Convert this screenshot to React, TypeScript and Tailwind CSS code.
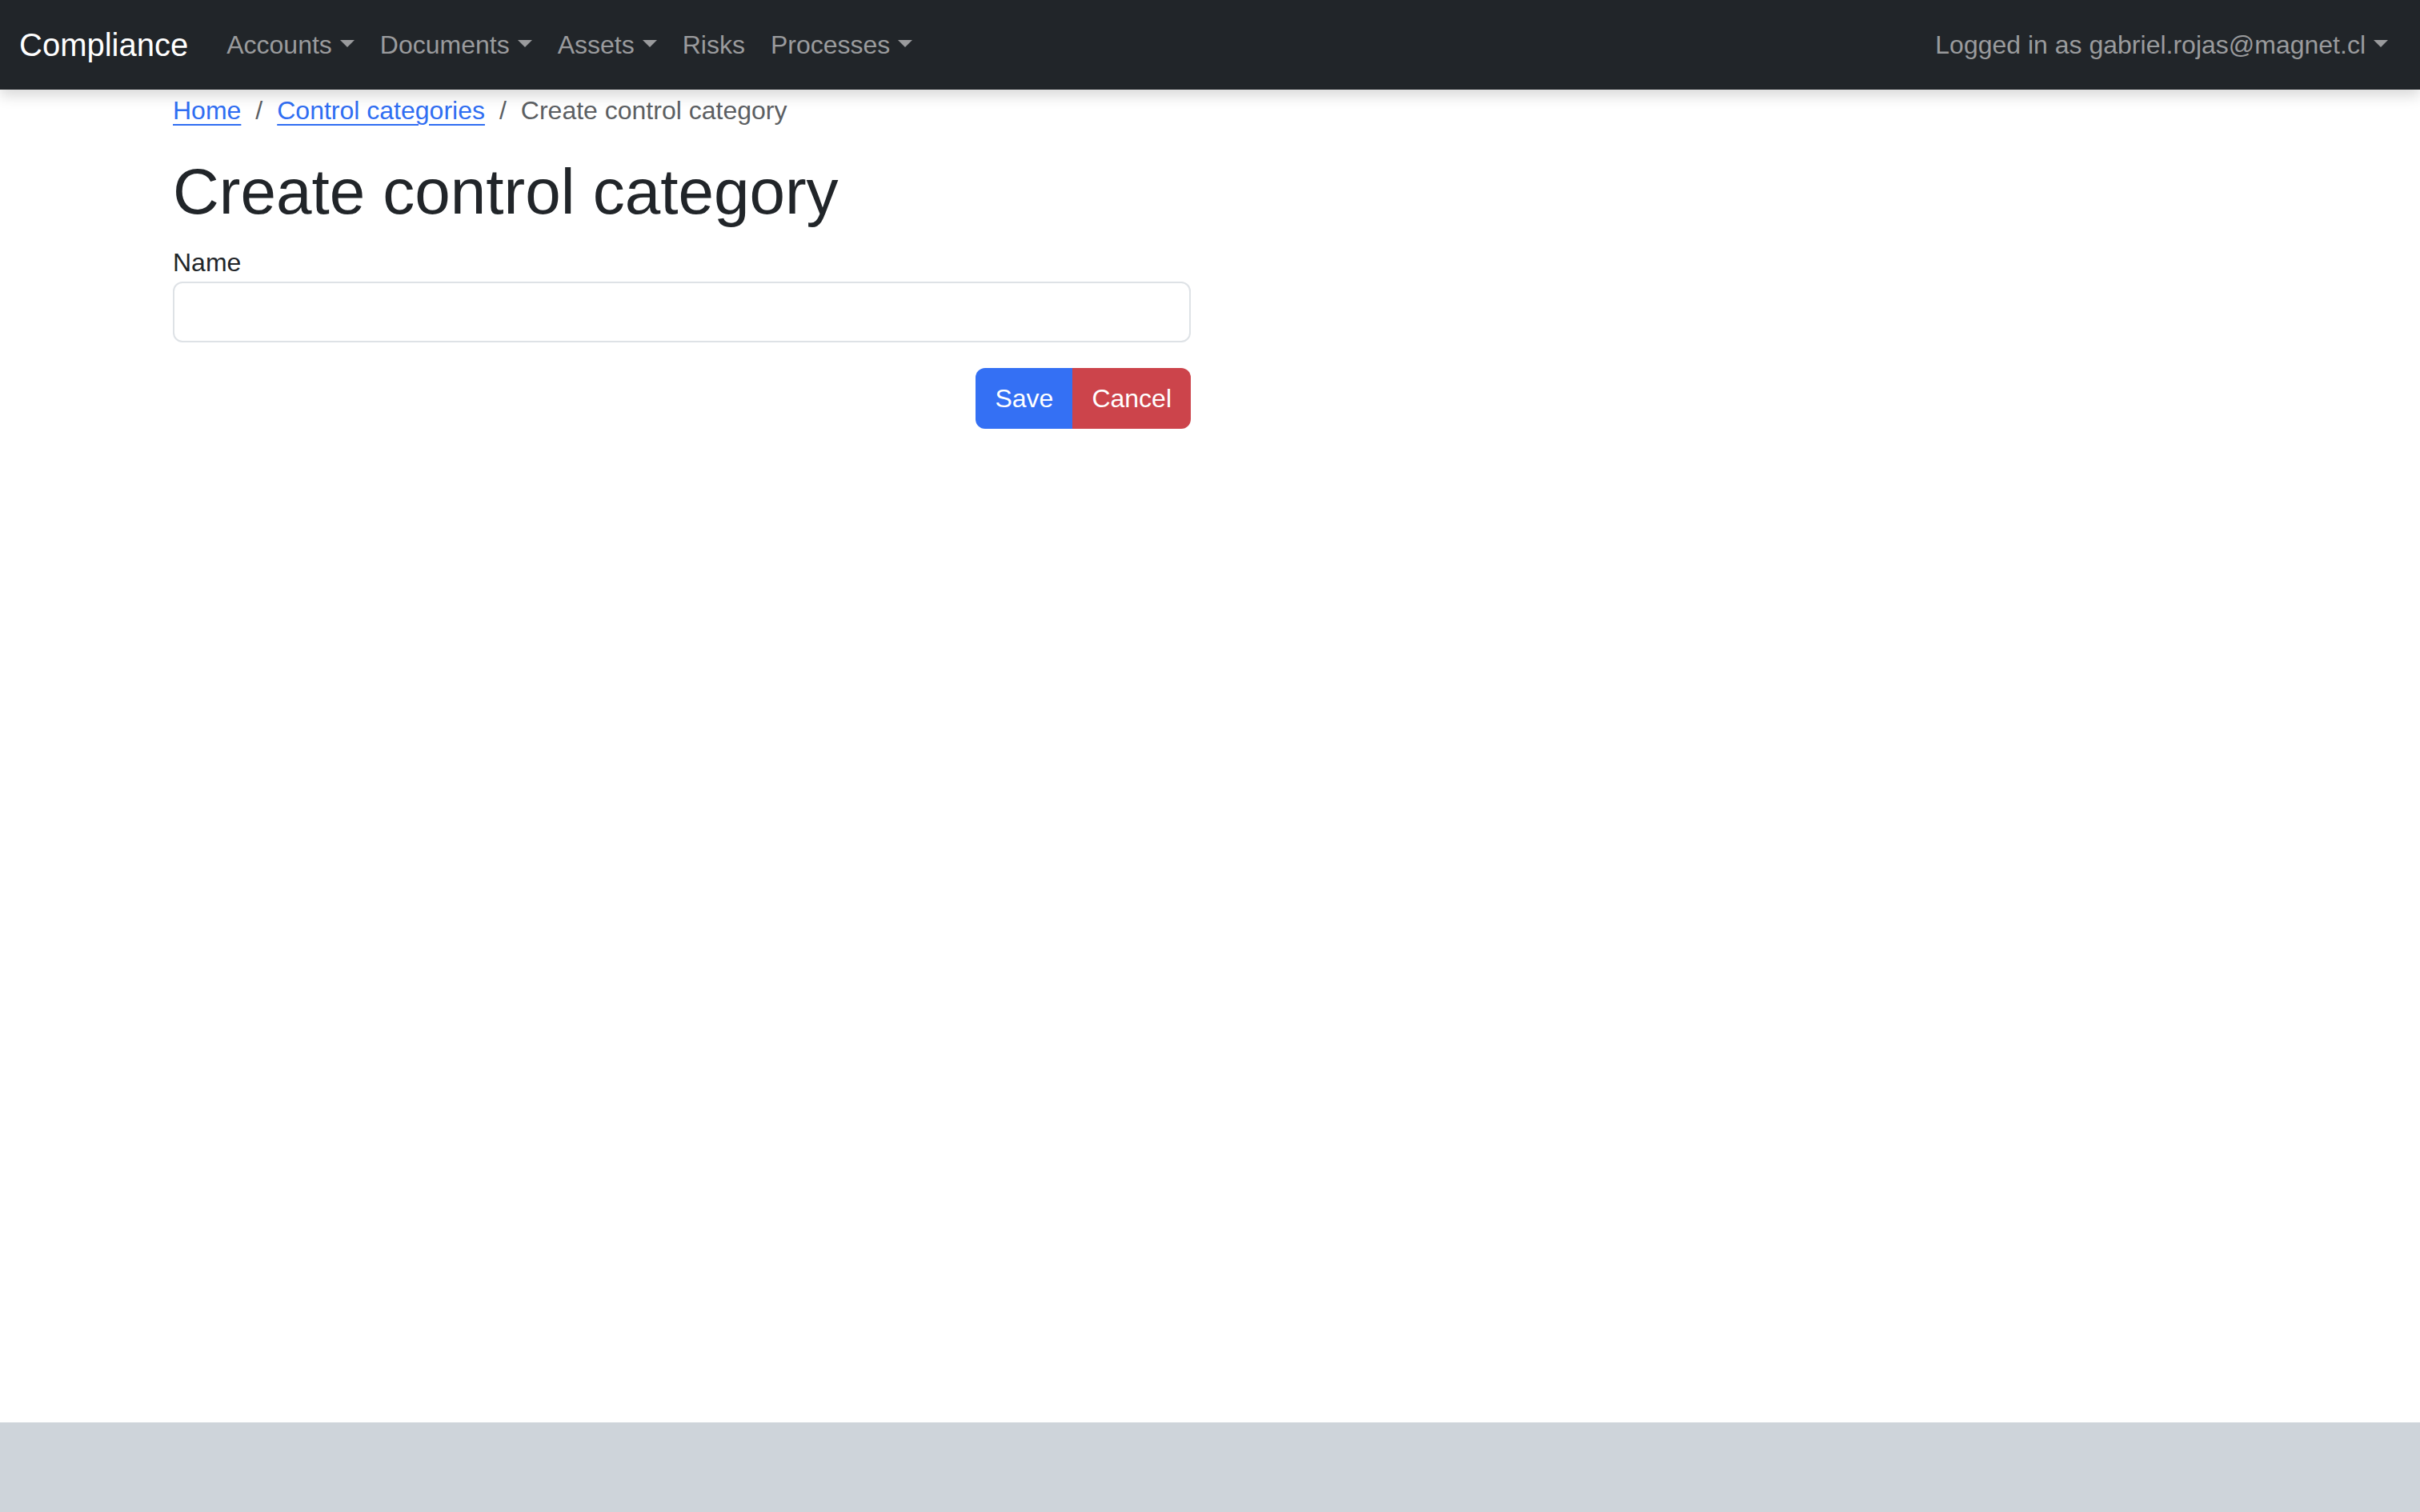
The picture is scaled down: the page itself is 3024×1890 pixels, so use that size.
import React from 'react';

const navItems = [
    { label: 'Accounts', dropdown: true },
    { label: 'Documents', dropdown: true },
    { label: 'Assets', dropdown: true },
    { label: 'Risks', dropdown: false },
    { label: 'Processes', dropdown: true },
];

function Caret() {
    return (
        <span className="ml-[10px] inline-block h-0 w-0 border-x-[9px] border-t-[9px] border-x-transparent border-t-current align-[8px]" />
    );
}

function NavLink({ label, dropdown }: { label: string; dropdown?: boolean }) {
    return (
        <a className="block cursor-pointer px-[16px] py-[16px] leading-[48px] text-[#9a9b9d] hover:text-white/75">
            {label}
            {dropdown && <Caret />}
        </a>
    );
}

export default function App() {
    return (
        <div
            className="flex min-h-screen flex-col bg-white text-[32px] leading-[48px] text-[#212529]"
            style={{ fontFamily: '"Liberation Sans", Arial, sans-serif' }}
        >
            {/* ── Navbar ────────────────────────────────── */}
            <nav className="relative z-10 flex h-[112px] items-center bg-[#212529] px-[24px] shadow-[0_8px_16px_rgba(0,0,0,0.15)]">
                <a className="mr-[32px] text-[40px] leading-[60px] text-white">Compliance</a>
                <ul className="flex items-center">
                    {navItems.map((item) => (
                        <li key={item.label}>
                            <NavLink label={item.label} dropdown={item.dropdown} />
                        </li>
                    ))}
                </ul>
                <div className="ml-auto">
                    <NavLink label="Logged in as gabriel.rojas@magnet.cl" dropdown />
                </div>
            </nav>

            {/* ── Main ──────────────────────────────────── */}
            <main className="flex-1">
                <div className="mx-auto w-[2640px] px-[24px]">
                    <ol className="mb-[30px] flex items-center pt-[2px]">
                        <li>
                            <a className="cursor-pointer text-[#306ef2] underline decoration-[2px] underline-offset-[6px]">
                                Home
                            </a>
                        </li>
                        <li className="flex items-center pl-[18px]">
                            <span className="pr-[18px] text-[#5c5f63]">/</span>
                            <a className="cursor-pointer text-[#306ef2] underline decoration-[2px] underline-offset-[6px]">
                                Control categories
                            </a>
                        </li>
                        <li className="flex items-center pl-[18px] text-[#5c5f63]">
                            <span className="pr-[18px]">/</span>
                            Create control category
                        </li>
                    </ol>

                    <h1 className="mb-[16px] text-[80px] font-medium leading-[96px]">
                        Create control category
                    </h1>

                    <form className="w-[1272px]">
                        <label htmlFor="name" className="block">
                            Name
                        </label>
                        <input
                            id="name"
                            type="text"
                            className="mb-[32px] block h-[76px] w-full rounded-[12px] border-2 border-[#dee2e6] px-[24px] text-[32px] outline-none"
                        />
                        <div className="flex justify-end">
                            <div className="flex">
                                <button
                                    type="button"
                                    className="h-[76px] rounded-l-[12px] bg-[#3470f4] px-[24px] text-white"
                                >
                                    Save
                                </button>
                                <button
                                    type="button"
                                    className="h-[76px] rounded-r-[12px] bg-[#cc444b] px-[24px] text-white"
                                >
                                    Cancel
                                </button>
                            </div>
                        </div>
                    </form>
                </div>
            </main>

            {/* ── Footer ────────────────────────────────── */}
            <footer className="h-[112px] bg-[#ced4da]" />
        </div>
    );
}
